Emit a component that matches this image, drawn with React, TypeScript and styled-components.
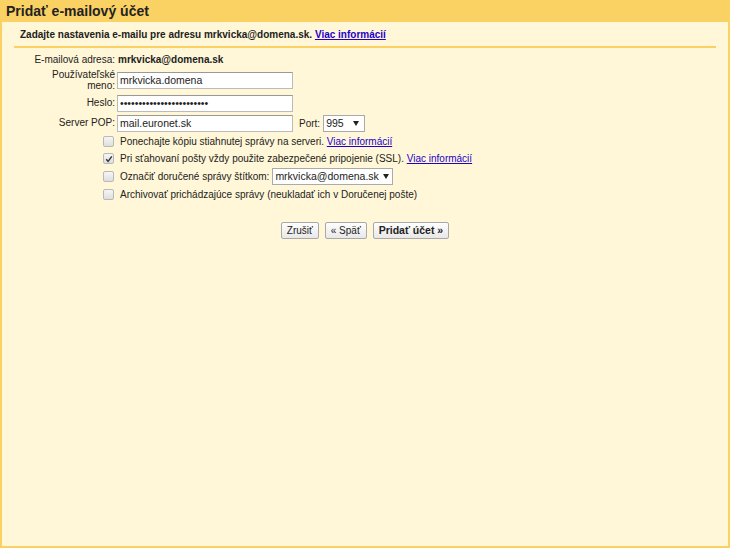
import React from 'react';
import styled, { createGlobalStyle } from 'styled-components';

const Global = createGlobalStyle`
  html, body { margin: 0; padding: 0; }
  body {
    font-family: "Liberation Sans", Arial, sans-serif;
    font-size: 10px;
    color: #222;
    background: #fff7d7;
  }
`;

const Page = styled.div`
  box-sizing: border-box;
  height: 548px;
  background: #fff7d7;
  border: 2px solid #fad163;
  border-top: 0;
`;

const Header = styled.div`
  height: 22px;
  background: #fad163;
  margin: 0 -2px;
  padding: 3px 0 0 6px;
  box-sizing: border-box;
  font-size: 14px;
  font-weight: bold;
  color: #222;
`;

const Intro = styled.div`
  margin: 0 12px;
  padding: 7px 0 5px 6px;
  line-height: 12px;
  border-bottom: 2px solid #fad163;
  font-weight: bold;
`;

const Link = styled.a<{ bold?: boolean }>`
  color: #2200cc;
  text-decoration: underline;
  font-weight: ${p => (p.bold ? 'bold' : 'normal')};
  cursor: pointer;
`;

const Form = styled.div`
  display: grid;
  grid-template-columns: 113px auto;
  column-gap: 3px;
  row-gap: 3px;
  padding-top: 6px;
  align-items: center;
`;

const Label = styled.div`
  text-align: right;
  line-height: 11.5px;
`;

const Value = styled.div`
  font-weight: bold;
  line-height: 11px;
`;

const Row = styled.div`
  display: flex;
  align-items: center;
`;

const Input = styled.input`
  box-sizing: border-box;
  width: 176px;
  height: 17px;
  margin: 0 0 0 -1px;
  padding: 0 2px;
  border: 1px solid #bbb;
  border-top-color: #999;
  font-family: "Liberation Sans", Arial, sans-serif;
  font-size: 10.5px;
  color: #222;
  background: #fff;
  outline: none;
`;

const PortLabel = styled.span`
  margin: 0 3px 0 6px;
`;

const Select = styled.div<{ w: number }>`
  box-sizing: border-box;
  width: ${p => p.w}px;
  height: 17px;
  display: flex;
  align-items: center;
  justify-content: space-between;
  padding: 0 5px 0 2px;
  border: 1px solid #aaa;
  background: #fff;
  font-size: 10.5px;
  white-space: nowrap;
  &::after {
    content: '';
    flex: none;
    margin-left: 4px;
    border-left: 3px solid transparent;
    border-right: 3px solid transparent;
    border-top: 5px solid #222;
  }
`;

const Options = styled.div`
  display: flex;
  flex-direction: column;
  padding: 1px 0 0 101px;
`;

const Option = styled.label`
  display: flex;
  align-items: center;
  gap: 3px;
  height: 17.6px;
`;

const Check = styled.span`
  box-sizing: border-box;
  width: 11px;
  height: 11px;
  margin-right: 3px;
  border: 1px solid #b8b8b8;
  border-radius: 2px;
  background: linear-gradient(#f6f6f6, #dedede);
  display: flex;
  align-items: center;
  justify-content: center;
`;

const Buttons = styled.div`
  display: flex;
  justify-content: center;
  gap: 6px;
  padding-top: 19px;
`;

const Button = styled.button<{ primary?: boolean }>`
  height: 17px;
  padding: 0 5px;
  margin: 0;
  border: 1px solid #a8a8a8;
  border-radius: 2px;
  background: linear-gradient(#fefefe, #e8e8e8);
  font-family: "Liberation Sans", Arial, sans-serif;
  font-size: ${p => (p.primary ? '10.5px' : '10px')};
  font-weight: ${p => (p.primary ? 'bold' : 'normal')};
  color: #222;
`;

const Tick = () => (
  <svg width="8" height="8" viewBox="0 0 8 8">
    <path d="M1.2 4.3 L3.1 6.3 L6.8 1.4" fill="none" stroke="#333" strokeWidth="1.4" />
  </svg>
);

export default function App() {
  return (
    <>
      <Global />
      <Page>
        <Header>Pridať e-mailový účet</Header>
        <Intro>
          Zadajte nastavenia e-mailu pre adresu mrkvicka@domena.sk. <Link bold>Viac informácií</Link>
        </Intro>
        <Form>
          <Label>E-mailová adresa:</Label>
          <Value>mrkvicka@domena.sk</Value>
          <Label>Používateľské<br />meno:</Label>
          <div><Input defaultValue="mrkvicka.domena" /></div>
          <Label>Heslo:</Label>
          <div><Input type="password" defaultValue="abcdefghijklmnopqrstuvwx" /></div>
          <Label>Server POP:</Label>
          <Row>
            <Input defaultValue="mail.euronet.sk" />
            <PortLabel>Port:</PortLabel>
            <Select w={42}>995</Select>
          </Row>
        </Form>
        <Options>
          <Option>
            <Check />
            <span>Ponechajte kópiu stiahnutej správy na serveri. <Link>Viac informácií</Link></span>
          </Option>
          <Option>
            <Check><Tick /></Check>
            <span>Pri sťahovaní pošty vždy použite zabezpečené pripojenie (SSL). <Link>Viac informácií</Link></span>
          </Option>
          <Option>
            <Check />
            <span>Označiť doručené správy štítkom:</span>
            <Select w={121}>mrkvicka@domena.sk</Select>
          </Option>
          <Option>
            <Check />
            <span>Archivovať prichádzajúce správy (neukladať ich v Doručenej pošte)</span>
          </Option>
        </Options>
        <Buttons>
          <Button>Zrušiť</Button>
          <Button>« Späť</Button>
          <Button primary>Pridať účet »</Button>
        </Buttons>
      </Page>
    </>
  );
}
